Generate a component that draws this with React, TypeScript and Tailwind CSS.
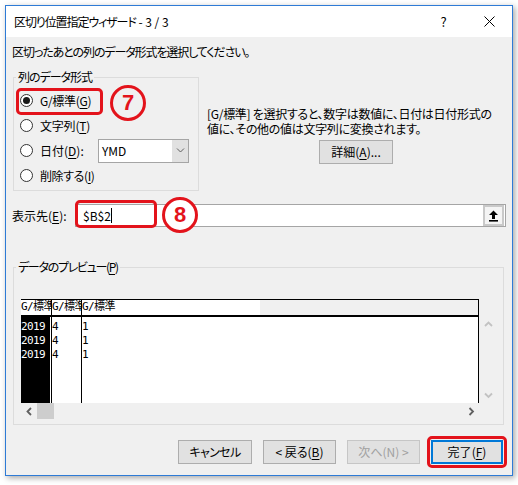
import React from "react";

function Radio({ checked }: { checked?: boolean }) {
  return (
    <span className="w-[13px] h-[13px] rounded-full border border-[#333333] bg-white flex items-center justify-center shrink-0">
      {checked && <span className="w-[7px] h-[7px] rounded-full bg-[#1a1a1a]" />}
    </span>
  );
}

// access key, e.g. (G) with the letter underlined
function Key({ k }: { k: string }) {
  return (
    <>
      (<span className="underline underline-offset-2">{k}</span>)
    </>
  );
}

function Marker({ n, className }: { n: string; className: string }) {
  return (
    <div
      className={
        "absolute w-[36px] h-[36px] rounded-full border-[3px] border-[#e3131b] flex items-center justify-center text-[#e3131b] font-bold text-[22px] leading-none font-['Liberation_Sans',sans-serif] " +
        className
      }
    >
      {n}
    </div>
  );
}

function Chevron({ dir, color, sw = 1.8 }: { dir: "up" | "down" | "left" | "right"; color: string; sw?: number }) {
  const pts = {
    up: "1,5 4.5,1.5 8,5",
    down: "1,1.5 4.5,5 8,1.5",
    left: "5,1 1.5,4.5 5,8",
    right: "1.5,1 5,4.5 1.5,8",
  }[dir];
  const w = dir === "up" || dir === "down" ? 9 : 7;
  const h = dir === "up" || dir === "down" ? 7 : 9;
  return (
    <svg width={w} height={h} viewBox={`0 0 ${w} ${h}`}>
      <polyline points={pts} fill="none" stroke={color} strokeWidth={sw} />
    </svg>
  );
}

const rows = ["2019", "2019", "2019"];

export default function App() {
  return (
    <div className="w-[518px] h-[485px] bg-white pt-[5px] pl-[5px] font-['Noto_Sans_CJK_JP',sans-serif] text-[12px] leading-[16px] text-black [font-feature-settings:'palt']">
      <div className="w-[508px] h-[471px] border border-[#2e7bd6] shadow-[2px_2px_6px_rgba(0,0,0,0.35)] bg-[#f0f0f0] flex flex-col">
        {/* Title bar */}
        <div className="h-[31px] bg-white flex items-center shrink-0">
          <span className="pl-[8px] whitespace-pre">
            <span className="tracking-[-1.1px]">区切り位置指定ウィザード</span> - 3 / 3
          </span>
          <div className="ml-auto flex h-full">
            <div className="w-[45px] flex items-center justify-center text-[13px]">?</div>
            <div className="w-[46px] flex items-center justify-center">
              <svg width="11" height="11" viewBox="0 0 11 11">
                <path d="M0.5 0.5 L10.5 10.5 M10.5 0.5 L0.5 10.5" stroke="#000" strokeWidth="1" />
              </svg>
            </div>
          </div>
        </div>

        {/* Body */}
        <div className="flex-1 px-[6px]">
          <p className="mt-[7px] tracking-[-1.1px]">区切ったあとの列のデータ形式を選択してください。</p>

          <div className="flex mt-[9px]">
            <fieldset className="ml-[1px] w-[186px] border border-[#dcdcdc]">
              <legend className="ml-[2px] px-[2px] tracking-[-1px]">列のデータ形式</legend>
              <div className="relative pt-[3px] pb-[2px] pl-[6px]">
                <div className="h-[25px] flex items-center gap-[7px]">
                  <Radio checked />
                  <span className="tracking-[-0.3px]">
                    G/標準<Key k="G" />
                  </span>
                </div>
                <div className="h-[25px] flex items-center gap-[7px]">
                  <Radio />
                  <span className="tracking-[-0.2px]">
                    文字列<Key k="T" />
                  </span>
                </div>
                <div className="h-[25px] flex items-center gap-[7px]">
                  <Radio />
                  <span className="w-[51px]">
                    日付<Key k="D" />:
                  </span>
                  <div className="w-[91px] h-[24px] border border-[#a5a5a5] bg-white flex">
                    <span className="flex-1 pl-[3px] flex items-center">YMD</span>
                    <span className="w-[16px] bg-[#e1e1e1] flex items-center justify-center">
                      <Chevron dir="down" color="#606060" sw={1} />
                    </span>
                  </div>
                </div>
                <div className="h-[25px] flex items-center gap-[7px]">
                  <Radio />
                  <span className="tracking-[-0.4px]">
                    削除する<Key k="I" />
                  </span>
                </div>

                <div className="absolute left-[2px] top-[3px] w-[87px] h-[27px] border-[3px] border-[#e3131b] rounded-[5px]" />
                <Marker n="7" className="left-[96px] top-[0px]" />
              </div>
            </fieldset>

            <div className="ml-[8px] w-[298px] pt-[37px]">
              <p className="whitespace-nowrap leading-[15px] tracking-[-0.3px]">
                [G/標準] を選択すると、数字は数値に、日付は日付形式の
                <br />
                値に、その他の値は文字列に変換されます。
              </p>
              <button className="mt-[4px] mx-auto w-[74px] h-[24px] bg-[#e1e1e1] border border-[#adadad] flex items-center justify-center">
                <span>
                  詳細<Key k="A" />
                  ...
                </span>
              </button>
            </div>
          </div>

          {/* Destination */}
          <div className="relative flex items-center mt-[13px] h-[23px]">
            <span className="w-[63px]">
              表示先<Key k="E" />:
            </span>
            <div className="w-[431px] h-[23px] border border-[#a5a5a5] bg-white flex items-center">
              <span className="pl-[7px]">$B$2</span>
              <span className="w-px h-[15px] bg-black" />
              <span className="ml-auto mr-px w-[21px] h-[21px] border-2 border-[#c9c9c9] bg-[#f4f4f4] flex items-center justify-center">
                <svg width="11" height="12" viewBox="0 0 11 12">
                  <path d="M5.5 0.5 L1 5 H4 V9 H7 V5 H10 Z" fill="#000" />
                  <rect x="1" y="10" width="9" height="1.6" fill="#000" />
                </svg>
              </span>
            </div>
            <div className="absolute left-[63px] top-[-4px] w-[82px] h-[28px] border-[3px] border-[#e3131b] rounded-[5px]" />
            <Marker n="8" className="left-[150px] top-[-7px] bg-white" />
          </div>

          {/* Preview */}
          <fieldset className="ml-[1px] mt-[32px] w-[491px] border border-[#dcdcdc]">
            <legend className="ml-[2px] px-[2px] tracking-[-1.3px]">
              データのプレビュー<Key k="P" />
            </legend>
            <div className="pt-[24px] pb-[5px] pl-[7px] font-['DejaVu_Sans_Mono','Noto_Sans_CJK_JP',monospace] text-[11px] tracking-[-0.6px] leading-[14px]">
              <div className="flex">
                <div className="w-[458px] border-t border-r border-black">
                  <div className="h-[15px] flex">
                    <div className="w-[30px] bg-white overflow-hidden whitespace-nowrap">G/標準</div>
                    <div className="w-[30px] bg-white border-l border-black overflow-hidden whitespace-nowrap">G/標準</div>
                    <div className="w-[179px] bg-white border-l border-black whitespace-nowrap">G/標準</div>
                    <div className="flex-1 bg-[#f0f0f0]" />
                  </div>
                  <div className="h-[2px] bg-black" />
                  <div className="h-[86px] flex bg-white">
                    <div className="w-[30px] bg-black text-white border-r border-white pt-[3px]">
                      {rows.map((r, i) => (
                        <div key={i} className="h-[14px]">
                          {r}
                        </div>
                      ))}
                    </div>
                    <div className="w-[30px] border-l border-black pt-[3px]">
                      {rows.map((_, i) => (
                        <div key={i} className="h-[14px]">
                          4
                        </div>
                      ))}
                    </div>
                    <div className="flex-1 border-l border-black pt-[3px]">
                      {rows.map((_, i) => (
                        <div key={i} className="h-[14px]">
                          1
                        </div>
                      ))}
                    </div>
                  </div>
                </div>
                <div className="w-[19px] pt-[18px]">
                  <div className="h-[86px] flex flex-col items-center justify-between py-[4px]">
                    <Chevron dir="up" color="#c2c2c2" />
                    <Chevron dir="down" color="#c2c2c2" />
                  </div>
                </div>
              </div>
              <div className="w-[458px] h-[16px] flex items-center">
                <span className="w-[16px] flex justify-center">
                  <Chevron dir="left" color="#606060" />
                </span>
                <span className="w-[17px] h-[16px] bg-[#cdcdcd]" />
                <span className="ml-auto w-[16px] flex justify-center">
                  <Chevron dir="right" color="#606060" />
                </span>
              </div>
            </div>
          </fieldset>

          {/* Buttons */}
          <div className="flex justify-end gap-[11px] mt-[15px] mr-[3px]">
            <button className="w-[74px] h-[24px] bg-[#e1e1e1] border border-[#adadad] tracking-[-0.6px]">キャンセル</button>
            <button className="w-[73px] h-[24px] bg-[#e1e1e1] border border-[#adadad]">
              &lt; 戻る<Key k="B" />
            </button>
            <button className="w-[73px] h-[24px] bg-[#e1e1e1] border border-[#c6c6c6] text-[#a0a0a0]">次へ(N) &gt;</button>
            <div className="relative">
              <button className="w-[72px] h-[24px] bg-[#e1e1e1] border-2 border-[#0078d7]">
                完了<Key k="F" />
              </button>
              <div className="absolute -inset-[4px] border-[3px] border-[#e3131b] rounded-[5px]" />
            </div>
          </div>
        </div>
      </div>
    </div>
  );
}
